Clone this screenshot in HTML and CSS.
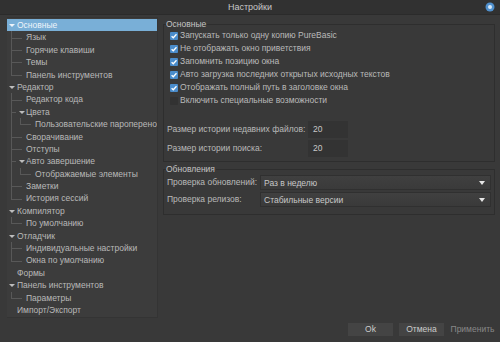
FILE: index.html
```html
<!DOCTYPE html>
<html lang="ru">
<head>
	<meta charset="UTF-8">
	<title>Настройки</title>
	<link rel="stylesheet" href="styles.css">
</head>
<body>
	<div class="window">
		<div class="titlebar">
			<span class="title">Настройки</span>
			<svg class="close" width="10" height="10" viewBox="0 0 10 10">
				<circle cx="5" cy="5" r="4.5" fill="#4f8fcc"/>
				<circle cx="5" cy="5" r="2" fill="#d6e8f8"/>
			</svg>
		</div>
		<div class="main">
			<div class="tree-panel">
				<ul class="tree">
					<li class="kids"><div class="row sel"><span class="arr"></span>Основные</div>
						<ul>
							<li><div class="row">Язык</div></li>
							<li><div class="row">Горячие клавиши</div></li>
							<li><div class="row">Темы</div></li>
							<li><div class="row">Панель инструментов</div></li>
						</ul>
					</li>
					<li class="kids"><div class="row"><span class="arr"></span>Редактор</div>
						<ul>
							<li><div class="row">Редактор кода</div></li>
							<li class="kids"><div class="row"><span class="arr"></span>Цвета</div>
								<ul>
									<li><div class="row">Пользовательские пароперенос</div></li>
								</ul>
							</li>
							<li><div class="row">Сворачивание</div></li>
							<li><div class="row">Отступы</div></li>
							<li class="kids"><div class="row"><span class="arr"></span>Авто завершение</div>
								<ul>
									<li><div class="row">Отображаемые элементы</div></li>
								</ul>
							</li>
							<li><div class="row">Заметки</div></li>
							<li><div class="row">История сессий</div></li>
						</ul>
					</li>
					<li class="kids"><div class="row"><span class="arr"></span>Компилятор</div>
						<ul>
							<li><div class="row">По умолчанию</div></li>
						</ul>
					</li>
					<li class="kids"><div class="row"><span class="arr"></span>Отладчик</div>
						<ul>
							<li><div class="row">Индивидуальные настройки</div></li>
							<li><div class="row">Окна по умолчанию</div></li>
						</ul>
					</li>
					<li><div class="row">Формы</div></li>
					<li class="kids"><div class="row"><span class="arr"></span>Панель инструментов</div>
						<ul>
							<li><div class="row">Параметры</div></li>
						</ul>
					</li>
					<li><div class="row">Импорт/Экспорт</div></li>
				</ul>
			</div>
			<div class="pages">
				<fieldset class="group general">
					<legend>Основные</legend>
					<div class="check"><span class="box on"></span>Запускать только одну копию PureBasic</div>
					<div class="check"><span class="box on"></span>Не отображать окно приветствия</div>
					<div class="check"><span class="box on"></span>Запомнить позицию окна</div>
					<div class="check"><span class="box on"></span>Авто загрузка последних открытых исходных текстов</div>
					<div class="check"><span class="box on"></span>Отображать полный путь в заголовке окна</div>
					<div class="check"><span class="box"></span>Включить специальные возможности</div>
					<div class="field first"><span class="label">Размер истории недавних файлов:</span><span class="input">20</span></div>
					<div class="field"><span class="label">Размер истории поиска:</span><span class="input">20</span></div>
				</fieldset>
				<fieldset class="group updates">
					<legend>Обновления</legend>
					<div class="field"><span class="label">Проверка обновлений:</span><span class="combo">Раз в неделю</span></div>
					<div class="field"><span class="label">Проверка релизов:</span><span class="combo">Стабильные версии</span></div>
				</fieldset>
			</div>
		</div>
		<div class="footer">
			<span class="btn">Ok</span>
			<span class="btn">Отмена</span>
			<span class="btn off">Применить</span>
		</div>
	</div>
</body>
</html>
```
FILE: styles.css
```css
body,div,ul,li,fieldset,legend{
	margin:0;
	padding:0;
}
ul{
	list-style-type: none;
}
body{
	background: #393939;
	color: #b9b9b9;
	font: 8.5px/1.2 "Liberation Sans", Arial, sans-serif;
}
.window{
	width: 500px;
	height: 342px;
	display: flex;
	flex-direction: column;
}
.titlebar{
	position: relative;
	height: 15px;
	background: #313131;
	border-bottom: 1px solid #2b2b2b;
	box-sizing: border-box;
	display: flex;
	align-items: center;
	justify-content: center;
}
.title{
	font-size: 9px;
	color: #c8c8c8;
}
.close{
	position: absolute;
	right: 5px;
	top: 2px;
}
.main{
	flex: 1;
	display: flex;
	padding: 2px 5px 0 7px;
	min-height: 0;
}
.tree-panel{
	width: 151px;
	background: #3c3c3c;
	border: 1px solid #343434;
	border-left: 0;
	box-sizing: border-box;
	padding-top: 1px;
	flex-shrink: 0;
}
.tree .row{
	position: relative;
	height: 12.4px;
	line-height: 12.4px;
	padding-left: 9px;
	white-space: nowrap;
	overflow: hidden;
}
.tree > li > .row{
	padding-left: 10px;
}
.tree .row.sel{
	background: #79afd7;
	color: #eef4fa;
}
.tree .arr{
	position: absolute;
	left: 2px;
	top: 5px;
	border-left: 3px solid transparent;
	border-right: 3px solid transparent;
	border-top: 3px solid #bdbdbd;
}
.tree .sel .arr{
	border-top-color: #eef4fa;
}
.tree ul{
	padding-left: 9px;
}
.tree > li > ul{
	padding-left: 10px;
}
.tree ul li{
	position: relative;
}
.tree ul li::before{
	content: "";
	position: absolute;
	left: -6px;
	top: 0;
	bottom: 0;
	border-left: 1px solid #585858;
}
.tree ul li:last-child::before{
	bottom: auto;
	height: 6.2px;
}
.tree ul li::after{
	content: "";
	position: absolute;
	left: -6px;
	top: 6.2px;
	width: 11px;
	border-top: 1px solid #585858;
}
.tree ul li.kids::after{
	width: 5px;
}
.pages{
	flex: 1;
	padding-left: 5px;
}
.group{
	border: 1px solid #2e2e2e;
	padding: 0 3px;
}
.group legend{
	line-height: 10px;
	padding: 0 1px 0 0;
	margin-left: -1px;
	color: #c4c4c4;
}
.general{
	margin-top: 2px;
	padding-bottom: 4px;
}
.check{
	display: flex;
	align-items: center;
	height: 13px;
	padding-left: 3px;
	white-space: nowrap;
}
.box{
	width: 8px;
	height: 8px;
	border-radius: 1px;
	background: #323232;
	margin-right: 2px;
	flex-shrink: 0;
	box-sizing: border-box;
}
.box.on{
	background: #4a8ccb url("data:image/svg+xml,%3Csvg xmlns='http://www.w3.org/2000/svg' viewBox='0 0 8 8'%3E%3Cpath d='M1.6 4.2 3.3 5.8 6.5 2.3' fill='none' stroke='%23fff' stroke-width='1.3'/%3E%3C/svg%3E") no-repeat center / 8px 8px;
}
.field{
	display: flex;
	align-items: center;
	margin-top: 2px;
}
.field.first{
	margin-top: 14px;
}
.label{
	width: 141px;
	flex-shrink: 0;
	white-space: nowrap;
}
.input{
	width: 40px;
	height: 17px;
	line-height: 17px;
	background: #333;
	padding-left: 5px;
	box-sizing: border-box;
	color: #c8c8c8;
}
.updates{
	margin-top: 2px;
	padding-bottom: 7px;
}
.updates .field:first-of-type{
	margin-top: 1px;
}
.updates .label{
	width: 93px;
}
.combo{
	position: relative;
	flex: 1;
	height: 15px;
	line-height: 15px;
	background: linear-gradient(#404040, #3a3a3a);
	border: 1px solid #303030;
	padding-left: 3px;
	box-sizing: border-box;
	color: #c8c8c8;
}
.combo::after{
	content: "";
	position: absolute;
	right: 5px;
	top: 5px;
	border-left: 3px solid transparent;
	border-right: 3px solid transparent;
	border-top: 4px solid #e6e6e6;
}
.footer{
	height: 24px;
	display: flex;
	justify-content: flex-end;
	align-items: flex-start;
	gap: 6px;
	padding: 5px 5px 0 0;
	box-sizing: border-box;
}
.btn{
	width: 45px;
	height: 13px;
	line-height: 13px;
	text-align: center;
	background: #444;
	color: #cccccc;
}
.btn.off{
	background: none;
	color: #888;
}
```
